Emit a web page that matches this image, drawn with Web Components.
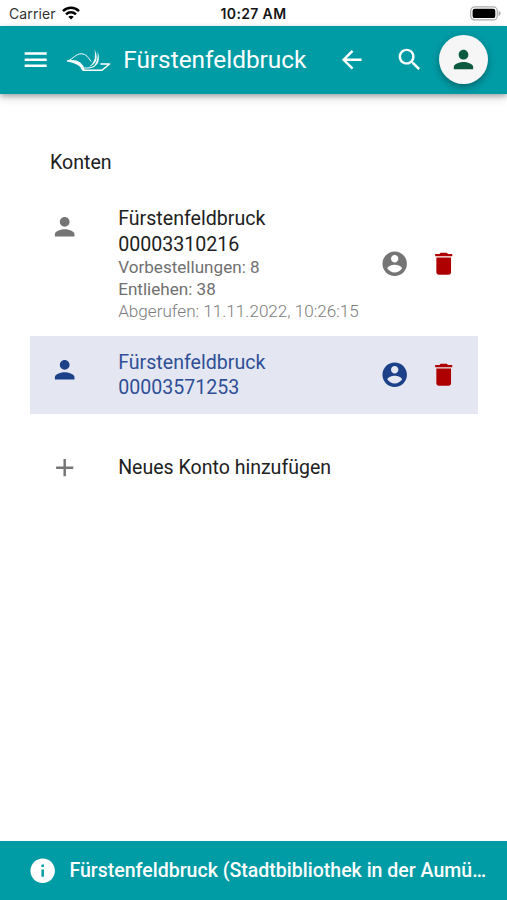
<!DOCTYPE html>
<html lang="de">
<head>
<meta charset="utf-8">
<title>Konten</title>
<style>
body { margin: 0; background: #fff; }
</style>
</head>
<body>
<account-page></account-page>
<script>
const ICONS = {
  menu: 'M3 18h18v-2H3v2zm0-5h18v-2H3v2zm0-7v2h18V6H3z',
  back: 'M20 11H7.83l5.59-5.59L12 4l-8 8 8 8 1.41-1.41L7.83 13H20v-2z',
  search: 'M15.5 14h-.79l-.28-.27C15.41 12.59 16 11.11 16 9.5 16 5.91 13.09 3 9.5 3S3 5.91 3 9.5 5.91 16 9.5 16c1.61 0 3.09-.59 4.23-1.57l.27.28v.79l5 4.99L20.49 19l-4.99-5zm-6 0C7.01 14 5 11.99 5 9.5S7.01 5 9.5 5 14 7.01 14 9.5 11.99 14 9.5 14z',
  person: 'M12 12c2.21 0 4-1.79 4-4s-1.79-4-4-4-4 1.79-4 4 1.79 4 4 4zm0 2c-2.67 0-8 1.34-8 4v2h16v-2c0-2.66-5.33-4-8-4z',
  account: 'M12 2C6.48 2 2 6.48 2 12s4.48 10 10 10 10-4.48 10-10S17.52 2 12 2zm0 3c1.66 0 3 1.34 3 3s-1.34 3-3 3-3-1.34-3-3 1.34-3 3-3zm0 14.2c-2.5 0-4.71-1.28-6-3.22.03-1.99 4-3.08 6-3.08 1.99 0 5.97 1.09 6 3.08-1.29 1.94-3.5 3.22-6 3.22z',
  trash: 'M6 19c0 1.1.9 2 2 2h8c1.1 0 2-.9 2-2V7H6v12zM19 4h-3.5l-1-1h-5l-1 1H5v2h14V4z',
  add: 'M19 13h-6v6h-2v-6H5v-2h6V5h2v6h6v2z',
  info: 'M12 2C6.48 2 2 6.48 2 12s4.48 10 10 10 10-4.48 10-10S17.52 2 12 2zm1 15h-2v-6h2v6zm0-8h-2V7h2v2z'
};

function define(name, css, html) {
  customElements.define(name, class extends HTMLElement {
    constructor() {
      super();
      this.attachShadow({ mode: 'open' }).innerHTML = `<style>${css}</style>${html}`;
    }
  });
}

customElements.define('md-icon', class extends HTMLElement {
  connectedCallback() {
    if (this.shadowRoot) return;
    this.attachShadow({ mode: 'open' }).innerHTML = `
      <style>
        :host { display: block; flex: none; width: 29.4px; height: 29.4px; }
        svg { display: block; width: 100%; height: 100%; fill: currentColor; }
      </style>
      <svg viewBox="0 0 24 24"><path d="${ICONS[this.getAttribute('name')]}"/></svg>`;
  }
});

define('status-bar', `
  :host { display: grid; grid-template-columns: 1fr auto 1fr; align-items: center; height: 25.5px;
    box-sizing: border-box; padding: 2px 6px 0 9px; color: #151515; font: 14px/20px Inter, sans-serif; }
  .left { display: flex; align-items: center; gap: 6px; }
  .carrier { letter-spacing: 0.1px; color: #333; }
  .time { font-weight: 600; font-size: 14px; letter-spacing: .35px; margin-right: 3px; }
  .battery { justify-self: end; display: block; margin-top: -1px; }
  svg { display: block; margin-top: -2px; }
`, `
  <div class="left"><span class="carrier">Carrier</span>
    <svg width="18" height="14" viewBox="0 0 18 14" fill="none" stroke="#000" stroke-width="2.5">
      <path d="M1 5.1C5.5.7 12.5.7 17 5.1"/><path d="M4 8.3c2.8-2.7 7.2-2.7 10 0"/>
      <path d="M9 13.4 6.300 10.700c1.500-1.400 3.900-1.400 5.400 0z" fill="#000" stroke="none"/>
    </svg>
  </div>
  <span class="time">10:27 AM</span>
  <svg class="battery" width="31" height="15" viewBox="0 0 31 15">
    <rect x=".7" y=".9" width="26.6" height="13" rx="4" fill="#fff" stroke="#aaa" stroke-width="1.2"/>
    <rect x="2.600" y="2.700" width="22.700" height="9.400" rx="2.200"/>
    <path d="M28.700 5c2.600 1 2.600 4 0 5z" fill="#aaa"/>
  </svg>`);

define('library-logo', `
  :host { display: block; width: 46px; height: 24px; }
  svg { display: block; }
`, `
  <svg width="46" height="24" viewBox="0 0 46 24" fill="none" stroke="#fff" stroke-linecap="round" stroke-linejoin="round">
    <path d="M1.5 12C8 9.500 9.500 4.800 15.500 4.800c4.700 0 6.800 4 9.500 7.500" stroke-width="1"/>
    <path d="M1.500 12c7-1 14.500 0 16.500 9h-1.500c-1-5-7-7.500-15-9z" fill="#fff" stroke-width="1.200"/>
    <path d="M17.500 21.300H36l7.500-6.300H35" stroke-width="1.500"/>
    <path d="M18.500 19c4 .3 7.500-.2 9.500-1.800" stroke-width="1"/>
    <path d="M28.800 1.500c1 6 .2 12-5.300 16 8-3 8.300-10 5.300-16z" fill="#fff" stroke-width=".2"/>
    <path d="M31.800 3.500c.3 6-1.300 11.500-5.300 15.200 6-2.700 7.600-8.700 5.300-15.200z" fill="#fff" stroke-width=".2"/>
  </svg>`);

define('app-bar', `
  :host { display: flex; align-items: center; height: 68.5px; box-sizing: border-box; padding: 0 19.200px 0 20.500px;
    background: #009ca6; color: #fff; box-shadow: 0 2px 5px rgba(0,0,0,.3), 0 5px 9px rgba(0,0,0,.1); position: relative; }
  library-logo { margin: 2px 0 0 16px; }
  h1 { flex: 1; margin: 0 0 0 11.300px; font: 400 24.400px/36px Roboto, sans-serif; }
  .search { margin: 0 14.500px 0 28.800px; }
  .fab { display: grid; place-items: center; width: 49px; height: 49px; border-radius: 50%; background: #f6f6f6;
    color: #0c5a3f; box-shadow: 0 4px 6px -1px rgba(0,0,0,.25), 0 2px 11px rgba(0,0,0,.15); }
  .fab md-icon { width: 29px; height: 29px; }
`, `
  <md-icon name="menu"></md-icon><library-logo></library-logo>
  <h1><slot></slot></h1>
  <md-icon name="back"></md-icon><md-icon class="search" name="search"></md-icon>
  <div class="fab"><md-icon name="person"></md-icon></div>`);

define('account-row', `
  :host { display: grid; grid-template-columns: 68.5px 1fr auto; padding: 13.7px 19.5px 12.7px 19.7px; color: #212121; --icon: #757575; }
  :host([selected]) { background: #e4e7f1; color: #2f4f97; --icon: #1c4189; padding-top: 14px; }
  .avatar { color: var(--icon); margin-top: 5.300px; }
  .text { font: 19.600px/25.600px Roboto, sans-serif; }
  .actions { display: flex; align-items: center; gap: 19.600px; color: var(--icon); margin-top: -1px; }
  .trash { color: #ae0000; }
`, `
  <md-icon class="avatar" name="person"></md-icon>
  <div class="text"><slot></slot></div>
  <div class="actions"><md-icon name="account"></md-icon><md-icon class="trash" name="trash"></md-icon></div>`);

define('account-detail', `
  :host { display: block; font: 17.100px/21.900px Roboto, sans-serif; color: #707070; margin-top: -.1px; }
  :host([faint]) { color: #7c7c7c; font-weight: 300; }
`, `<slot></slot>`);

define('add-row', `
  :host { display: grid; grid-template-columns: 68.5px 1fr; align-items: center; margin-top: 39.5px; padding: 0 19.7px;
    color: #212121; font: 19.55px/29.4px Roboto, sans-serif; }
  md-icon { color: #757575; }
`, `<md-icon name="add"></md-icon><span><slot></slot></span>`);

define('info-bar', `
  :host { display: flex; align-items: center; gap: 12.5px; height: 59px; box-sizing: border-box; padding: 0 18px 0 27.5px;
    background: #009ca6; color: #fff; font: 500 19.55px/28px Roboto, sans-serif; }
  span { white-space: nowrap; }
`, `<md-icon name="info"></md-icon><span><slot></slot></span>`);

define('account-page', `
  :host { display: flex; flex-direction: column; height: 900px; overflow: hidden; background: #fff; }
  main { flex: 1; padding: 54.5px 29.5px 0 30px; }
  h2 { margin: 0 0 17.2px; padding-left: 20px; font: 400 19.6px/27px Roboto, sans-serif; color: #212121; }
`, `
  <status-bar></status-bar>
  <app-bar>Fürstenfeldbruck</app-bar>
  <main>
    <h2>Konten</h2>
    <account-row>
      <div>Fürstenfeldbruck</div><div>00003310216</div>
      <account-detail>Vorbestellungen: 8</account-detail>
      <account-detail>Entliehen: 38</account-detail>
      <account-detail faint>Abgerufen: 11.11.2022, 10:26:15</account-detail>
    </account-row>
    <account-row selected><div>Fürstenfeldbruck</div><div>00003571253</div></account-row>
    <add-row>Neues Konto hinzufügen</add-row>
  </main>
  <info-bar>Fürstenfeldbruck (Stadtbibliothek in der Aumü…</info-bar>`);
</script>
</body>
</html>
